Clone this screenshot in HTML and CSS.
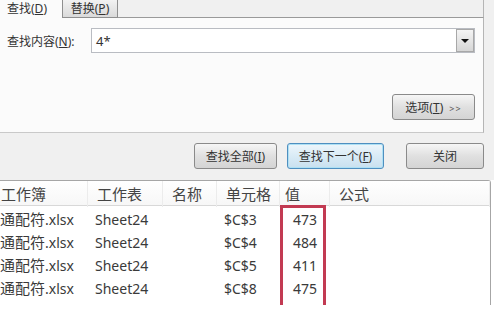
FILE: index.html
```html
<!DOCTYPE html>
<html lang="zh-CN">
<head>
    <meta charset="UTF-8">
    <title>查找和替换</title>
    <link rel="stylesheet" href="styles.css">
</head>
<body>
    <div class="dialog">
        <div class="tabs">
            <div class="tab active">查找(<u>D</u>)</div>
            <div class="tab">替换(<u>P</u>)</div>
            <div class="tab-fill"></div>
        </div>
        <div class="panel">
            <div class="find-row">
                <label class="find-label">查找内容(<u>N</u>):</label>
                <div class="combo">
                    <span class="combo-value">4*</span>
                    <span class="combo-arrow"><span class="triangle"></span></span>
                </div>
            </div>
            <div class="options-row">
                <button class="btn options">选项(<u>T</u>) <span class="more">&gt;&gt;</span></button>
            </div>
        </div>
        <div class="actions">
            <button class="btn find-all">查找全部(<u>I</u>)</button>
            <button class="btn find-next">查找下一个(<u>F</u>)</button>
            <button class="btn close">关闭</button>
        </div>
    </div>

    <div class="results">
        <div class="row head">
            <div class="cell book">工作簿</div>
            <div class="cell">工作表</div>
            <div class="cell">名称</div>
            <div class="cell">单元格</div>
            <div class="cell">值</div>
            <div class="cell">公式</div>
        </div>
        <div class="rows">
            <div class="row">
                <div class="cell book"><span class="cjk">通配符</span>.xlsx</div>
                <div class="cell">Sheet24</div>
                <div class="cell"></div>
                <div class="cell">$C$3</div>
                <div class="cell value">473</div>
                <div class="cell"></div>
            </div>
            <div class="row">
                <div class="cell book"><span class="cjk">通配符</span>.xlsx</div>
                <div class="cell">Sheet24</div>
                <div class="cell"></div>
                <div class="cell">$C$4</div>
                <div class="cell value">484</div>
                <div class="cell"></div>
            </div>
            <div class="row">
                <div class="cell book"><span class="cjk">通配符</span>.xlsx</div>
                <div class="cell">Sheet24</div>
                <div class="cell"></div>
                <div class="cell">$C$5</div>
                <div class="cell value">411</div>
                <div class="cell"></div>
            </div>
            <div class="row">
                <div class="cell book"><span class="cjk">通配符</span>.xlsx</div>
                <div class="cell">Sheet24</div>
                <div class="cell"></div>
                <div class="cell">$C$8</div>
                <div class="cell value">475</div>
                <div class="cell"></div>
            </div>
        </div>
        <!-- red marker drawn over the value column -->
        <div class="highlight"></div>
    </div>
</body>
</html>
```

FILE: styles.css
```css
body {
    margin: 0;
    background: #fff;
    font-family: "Noto Sans", "Noto Sans CJK SC", sans-serif;
    color: #222;
}

u {
    text-decoration: underline;
    text-underline-offset: 1px;
}

.dialog {
    background-color: #f0f0f0;
    font-size: 12px;
}

.tabs {
    display: flex;
    width: 484px;
    height: 18px;
}

.tab {
    box-sizing: border-box;
    height: 18px;
    line-height: 17px;
    font-size: 12px;
}

.tab.active {
    width: 62px;
    padding-left: 7px;
    background-color: #fbfbfb;
    color: #333;
}

.tab:not(.active) {
    width: 56px;
    text-align: center;
    border: 1px solid #8f8f8f;
    border-top: none;
    background: linear-gradient(#f2f2f2, #dadada);
    color: #333;
}

.tab-fill {
    flex: 1;
    border-bottom: 1px solid #9a9a9a;
    border-right: 1px solid #b5b5b5;
}

.panel {
    box-sizing: border-box;
    display: flex;
    flex-direction: column;
    width: 484px;
    height: 115px;
    padding: 10px 8px 12px 7px;
    background-color: #fbfbfb;
    border-right: 1px solid #b5b5b5;
    border-bottom: 1px solid #c9c9c9;
}

.find-row {
    display: flex;
    align-items: center;
    height: 25px;
}

.find-label {
    width: 84px;
    color: #333;
}

.combo {
    box-sizing: border-box;
    display: flex;
    align-items: center;
    flex: 1;
    height: 25px;
    background-color: #fff;
    border: 1px solid #b9bcc2;
}

.combo-value {
    flex: 1;
    padding-left: 4px;
    font-size: 13px;
    color: #333;
}

.combo-arrow {
    box-sizing: border-box;
    display: flex;
    align-items: center;
    justify-content: center;
    width: 18px;
    height: 23px;
    border: 1px solid #a8a8a8;
    background: linear-gradient(#f4f4f4, #d6d6d6);
}

.triangle {
    width: 0;
    height: 0;
    border-left: 4px solid transparent;
    border-right: 4px solid transparent;
    border-top: 4px solid #111;
}

.options-row {
    display: flex;
    justify-content: flex-end;
    margin-top: auto;
}

.btn {
    box-sizing: border-box;
    height: 26px;
    padding: 0;
    font-family: inherit;
    font-size: 12px;
    color: #333;
    background: linear-gradient(#f6f6f6, #e0e0e0 50%, #d4d4d4);
    border: 1px solid #8a8a8a;
    border-radius: 3px;
}

.options {
    width: 83px;
}

.more {
    font-size: 9px;
    letter-spacing: 1px;
    margin-left: 3px;
    color: #555;
}

.actions {
    display: flex;
    justify-content: flex-end;
    gap: 10px;
    padding: 10px 10px 11px 0;
}

.find-all {
    width: 83px;
}

.find-next {
    width: 97px;
    border-color: #4f8fc0;
    background: linear-gradient(#eef6fb, #d9ebf6 50%, #c9e0ef);
    box-shadow: inset 0 0 0 1px #aee0f4;
}

.close {
    width: 78px;
    margin-left: 12px;
}

.results {
    position: relative;
    box-sizing: border-box;
    width: 491px;
    height: 125px;
    background-color: #fff;
    border-top: 1px solid #a6a6a6;
    border-right: 1px solid #a6a6a6;
    border-top-right-radius: 3px;
    font-size: 14px;
}

.row {
    display: grid;
    grid-template-columns: 88px 75px 54px 63px 50px 1fr;
    height: 23px;
    line-height: 23px;
    color: #3a3a3a;
}

.row .cell {
    padding-left: 7px;
    white-space: nowrap;
}

.row .cell.book {
    padding-left: 0;
}

.cjk {
    font-size: 15px;
}

.row .cell.value {
    padding-left: 0;
    padding-right: 13px;
    text-align: right;
}

.row.head {
    box-sizing: border-box;
    height: 25px;
    line-height: 26px;
    font-size: 15px;
    color: #444;
    background: linear-gradient(#fff, #f7f7f7);
    border-bottom: 1px solid #d8d8d8;
}

.row.head .cell {
    padding-left: 9px;
    border-right: 1px solid #ececec;
}

.row.head .cell.book {
    padding-left: 1px;
}

.row.head .cell:nth-child(5) {
    padding-left: 5px;
}

.rows {
    padding-top: 2px;
}

.highlight {
    position: absolute;
    left: 280px;
    top: 24px;
    width: 46px;
    height: 100px;
    box-sizing: border-box;
    border: 3px solid #c23a52;
    border-bottom: none;
}
```
